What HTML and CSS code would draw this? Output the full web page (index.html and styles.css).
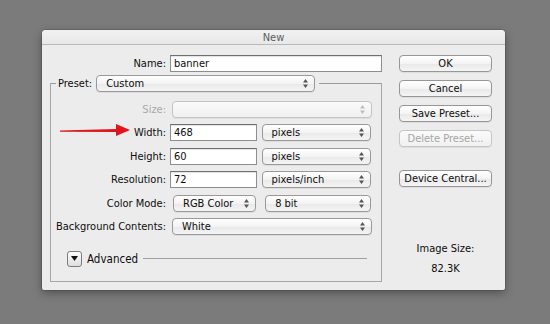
FILE: index.html
```html
<!DOCTYPE html>
<html>
<head>
<meta charset="utf-8">
<link rel="stylesheet" href="styles.css">
</head>
<body>
<div class="dialog">
  <div class="titlebar">New</div>
  <div class="body">
    <div class="main">
      <div class="name-row">
        <span class="label name-label">Name:</span>
        <div class="field name-field">banner</div>
      </div>
      <fieldset class="preset">
        <legend class="legend">
          <span class="label">Preset:</span>
          <div class="popup preset-popup"><span>Custom</span><svg class="arrows" width="5" height="9" viewBox="0 0 5 9"><path d="M0 3.5 L2.5 0 L5 3.5 Z M0 5.5 L2.5 9 L5 5.5 Z"/></svg></div>
        </legend>
        <div class="grid">
          <span class="label disabled">Size:</span>
          <div class="popup wide disabled"><span></span><svg class="arrows" width="5" height="9" viewBox="0 0 5 9"><path d="M0 3.5 L2.5 0 L5 3.5 Z M0 5.5 L2.5 9 L5 5.5 Z"/></svg></div>

          <span class="label">Width:</span>
          <div class="pair"><div class="field num">468</div><div class="popup unit"><span>pixels</span><svg class="arrows" width="5" height="9" viewBox="0 0 5 9"><path d="M0 3.5 L2.5 0 L5 3.5 Z M0 5.5 L2.5 9 L5 5.5 Z"/></svg></div></div>

          <span class="label">Height:</span>
          <div class="pair"><div class="field num">60</div><div class="popup unit"><span>pixels</span><svg class="arrows" width="5" height="9" viewBox="0 0 5 9"><path d="M0 3.5 L2.5 0 L5 3.5 Z M0 5.5 L2.5 9 L5 5.5 Z"/></svg></div></div>

          <span class="label">Resolution:</span>
          <div class="pair"><div class="field num">72</div><div class="popup unit"><span>pixels/inch</span><svg class="arrows" width="5" height="9" viewBox="0 0 5 9"><path d="M0 3.5 L2.5 0 L5 3.5 Z M0 5.5 L2.5 9 L5 5.5 Z"/></svg></div></div>

          <span class="label">Color Mode:</span>
          <div class="pair"><div class="popup mode"><span>RGB Color</span><svg class="arrows" width="5" height="9" viewBox="0 0 5 9"><path d="M0 3.5 L2.5 0 L5 3.5 Z M0 5.5 L2.5 9 L5 5.5 Z"/></svg></div><div class="popup bits"><span>8 bit</span><svg class="arrows" width="5" height="9" viewBox="0 0 5 9"><path d="M0 3.5 L2.5 0 L5 3.5 Z M0 5.5 L2.5 9 L5 5.5 Z"/></svg></div></div>

          <span class="label">Background Contents:</span>
          <div class="popup wide"><span>White</span><svg class="arrows" width="5" height="9" viewBox="0 0 5 9"><path d="M0 3.5 L2.5 0 L5 3.5 Z M0 5.5 L2.5 9 L5 5.5 Z"/></svg></div>
        </div>
        <div class="advanced">
          <div class="disclosure"><svg width="7" height="5" viewBox="0 0 7 5"><path d="M0 0 L7 0 L3.5 5 Z"/></svg></div>
          <span class="adv-label">Advanced</span>
          <div class="adv-line"></div>
        </div>
      </fieldset>
    </div>
    <div class="side">
      <div class="btn">OK</div>
      <div class="btn">Cancel</div>
      <div class="btn">Save Preset...</div>
      <div class="btn disabled">Delete Preset...</div>
      <div class="btn device">Device Central...</div>
      <div class="size-label">Image Size:</div>
      <div class="size-value">82.3K</div>
    </div>
  </div>
  <svg class="red-arrow" width="72" height="14" viewBox="0 0 72 14">
    <path d="M0 7.5 L56 6 L56 1 L70 7 L56 13 L56 9 L0 8.8 Z" fill="#e0161c"/>
  </svg>
</div>
</body>
</html>
```

FILE: styles.css
```css
html, body {
  margin: 0;
  padding: 0;
}
body {
  width: 550px;
  height: 324px;
  background: #7b7b7b;
  padding: 30px 0 0 42px;
  box-sizing: border-box;
  font-family: "DejaVu Sans Condensed", "DejaVu Sans", sans-serif;
  font-size: 11px;
  color: #0d0d0d;
  overflow: hidden;
}
.dialog {
  position: relative;
  width: 463px;
  height: 260px;
  background: #ececec;
  border-radius: 4px 4px 2px 2px;
  box-shadow: 0 3px 10px rgba(0,0,0,0.35), 0 0 0 1px rgba(0,0,0,0.12);
}
.titlebar {
  height: 14px;
  border-bottom: 1px solid #b9b9b9;
  background: linear-gradient(#f1f1f1, #e8e8e8);
  border-radius: 4px 4px 0 0;
  text-align: center;
  line-height: 15px;
  color: #5c5c5c;
  font-size: 11px;
}
.body {
  display: flex;
  padding-top: 10px;
}
.main {
  width: 340px;
}
.label {
  text-align: right;
  white-space: nowrap;
}
.label.disabled { color: #a9a9a9; }
.name-row {
  display: flex;
  align-items: center;
  gap: 4px;
  height: 17px;
}
.name-label { width: 124px; }
.field {
  box-sizing: border-box;
  height: 17px;
  background: #fff;
  border: 1px solid #8e8e8e;
  border-top-color: #6f6f6f;
  box-shadow: inset 0 1px 1px rgba(0,0,0,0.12);
  padding-left: 3px;
  line-height: 15px;
}
.name-field { width: 212px; }
.preset {
  margin: 3px 0 0 8px;
  padding: 9px 9px 14px 0;
  width: 332px;
  box-sizing: border-box;
  border: 1px solid #a6a6a6;
  border-top-color: #9a9a9a;
}
.legend {
  display: flex;
  align-items: center;
  gap: 4px;
  margin-left: 5px;
  padding: 0 4px 0 2px;
}
.popup {
  box-sizing: border-box;
  height: 17px;
  display: flex;
  align-items: center;
  justify-content: space-between;
  padding: 0 6px 0 9px;
  border: 1px solid #999;
  border-radius: 4px;
  background: linear-gradient(#ffffff, #f3f3f3 50%, #e9e9e9 51%, #f4f4f4);
  box-shadow: 0 1px 0 rgba(0,0,0,0.06);
  white-space: nowrap;
}
.popup .arrows { fill: #555; flex: none; }
.popup.disabled {
  border-color: #c4c4c4;
  background: linear-gradient(#fafafa, #f0f0f0);
}
.popup.disabled .arrows { fill: #bdbdbd; }
.preset-popup { width: 219px; }
.grid {
  display: grid;
  grid-template-columns: 115px 201px;
  grid-auto-rows: 17px;
  row-gap: 6.4px;
  column-gap: 4px;
  align-items: center;
}
.grid > .popup.wide { width: 200px; margin-left: 2px; }
.pair {
  display: flex;
  align-items: center;
  height: 17px;
}
.num { width: 87px; }
.unit { width: 110px; margin-left: 5px; }
.mode { width: 84px; margin-left: 3px; }
.bits { width: 107px; margin-left: 9px; }
.advanced {
  display: flex;
  align-items: center;
  margin-top: 16px;
  margin-left: 16px;
  height: 16px;
}
.disclosure {
  box-sizing: border-box;
  width: 15px;
  height: 16px;
  border: 1px solid #7c7c7c;
  border-radius: 3px;
  background: linear-gradient(#fdfdfd, #dedede);
  display: flex;
  align-items: center;
  justify-content: center;
}
.disclosure svg { fill: #111; }
.adv-label {
  margin-left: 5px;
  font-size: 11.5px;
}
.adv-line {
  flex: 1;
  height: 1px;
  background: #9f9f9f;
  margin: 0 5px 0 5px;
}
.side {
  margin-left: 17px;
  width: 93px;
  display: flex;
  flex-direction: column;
  align-items: stretch;
}
.btn {
  box-sizing: border-box;
  height: 17px;
  margin-bottom: 8px;
  border: 1px solid #969696;
  border-radius: 4px;
  background: linear-gradient(#ffffff, #f4f4f4 50%, #e8e8e8 51%, #f5f5f5);
  box-shadow: 0 1px 0 rgba(0,0,0,0.06);
  text-align: center;
  line-height: 15px;
  white-space: nowrap;
}
.btn.disabled {
  color: #a6a6a6;
  border-color: #c6c6c6;
  background: linear-gradient(#fbfbfb, #f0f0f0);
}
.btn.device { margin-top: 15px; }
.size-label {
  margin-top: 47px;
  text-align: center;
  line-height: 14px;
}
.size-value {
  margin-top: 6px;
  text-align: center;
  line-height: 14px;
}
.red-arrow {
  position: absolute;
  left: 18px;
  top: 93px;
}
```
